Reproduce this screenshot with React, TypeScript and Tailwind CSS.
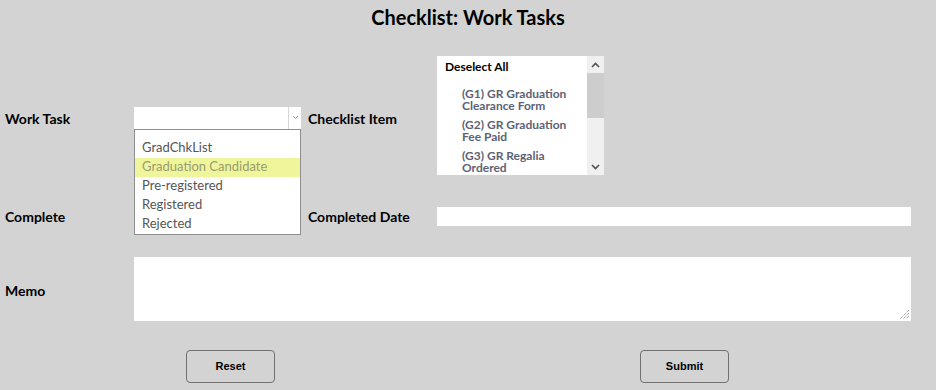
import React from "react";

const font = { fontFamily: '"Lato", "Open Sans", sans-serif' };

const options = ["GradChkList", "Graduation Candidate", "Pre-registered", "Registered", "Rejected"];

const checklist = [
  ["(G1) GR Graduation", "Clearance Form"],
  ["(G2) GR Graduation", "Fee Paid"],
  ["(G3) GR Regalia", "Ordered"],
];

function Chevron({ up }: { up?: boolean }) {
  return (
    <svg width="9" height="6" viewBox="0 0 9 6" className="block">
      <path
        d={up ? "M1 5 L4.5 1.5 L8 5" : "M1 1 L4.5 4.5 L8 1"}
        fill="none"
        stroke="#505050"
        strokeWidth="1.6"
      />
    </svg>
  );
}

function WorkTaskSelect() {
  return (
    <div className="relative w-[167px] h-[22px] mt-[4px]">
      <div className="flex h-full bg-white">
        <div className="flex-1" />
        <div className="w-[13px] border-l border-[#d6d6d6] flex items-center justify-center">
          <svg width="7" height="5" viewBox="0 0 7 5">
            <path d="M1 1 L3.5 3.5 L6 1" fill="none" stroke="#9a9a9a" strokeWidth="1" />
          </svg>
        </div>
      </div>
      {/* open dropdown */}
      <div className="absolute left-0 top-[22px] w-[167px] h-[106px] bg-white border border-[#8f8f8f] z-10 text-[13px] text-[#555]">
        <div className="h-[9px]" />
        {options.map((o, i) => (
          <div
            key={o}
            className={`h-[19px] flex items-center pl-[7px] ${
              i === 1 ? "bg-[#eef59b] text-[#9b9b6e]" : ""
            }`}
          >
            {o}
          </div>
        ))}
      </div>
    </div>
  );
}

function ChecklistBox() {
  return (
    <div className="w-[167px] h-[119px] bg-white flex">
      <div className="flex-1 pt-[4px] pl-[8px] overflow-hidden">
        <div className="text-[12px] font-bold text-black leading-[14px]">Deselect All</div>
        <div className="pl-[17px] pt-[14px] flex flex-col gap-[7px]">
          {checklist.map(([a, b]) => (
            <div key={a} className="text-[12px] font-bold text-[#5c6275] leading-[12px] whitespace-nowrap">
              <div>{a}</div>
              <div>{b}</div>
            </div>
          ))}
        </div>
      </div>
      <div className="w-[17px] bg-[#f0f0f0] flex flex-col items-center">
        <div className="h-[17px] flex items-center justify-center">
          <Chevron up />
        </div>
        <div className="w-[17px] h-[45px] bg-[#cdcdcd]" />
        <div className="flex-1" />
        <div className="h-[17px] flex items-center justify-center">
          <Chevron />
        </div>
      </div>
    </div>
  );
}

function Label({ children, className = "" }: { children: React.ReactNode; className?: string }) {
  return <div className={`text-[14px] font-bold text-black ${className}`}>{children}</div>;
}

export default function App() {
  return (
    <div className="w-[936px] h-[390px] bg-[#d3d3d3] overflow-hidden" style={font}>
      <h1 className="text-center text-[20px] font-bold text-black pt-[5px] leading-[24px]">
        Checklist: Work Tasks
      </h1>

      <div className="flex items-center mt-[27px] pl-[5px] h-[119px]">
        <Label className="w-[129px] mt-[6px]">Work Task</Label>
        <WorkTaskSelect />
        <Label className="w-[129px] ml-[7px] mt-[6px]">Checklist Item</Label>
        <ChecklistBox />
      </div>

      <div className="flex items-center mt-[32px] pl-[5px] h-[19px]">
        <Label className="w-[303px]">Complete</Label>
        <Label className="w-[129px]">Completed Date</Label>
        <div className="w-[474px] h-[19px] bg-white" />
      </div>

      <div className="flex items-center mt-[31px] pl-[5px] h-[64px]">
        <Label className="w-[129px] mt-[3px]">Memo</Label>
        <div className="relative w-[777px] h-[64px] bg-white">
          <svg width="12" height="12" viewBox="0 0 12 12" className="absolute right-[1px] bottom-[1px]">
            <path d="M11 2 L2 11 M11 5 L5 11 M11 8 L8 11" stroke="#808080" strokeWidth="1" strokeDasharray="1 1" />
          </svg>
        </div>
      </div>

      <div className="flex mt-[29px]">
        <button
          className="ml-[186px] w-[89px] h-[33px] rounded-[4px] border border-[#707070] text-[11px] font-bold text-black"
          style={{ fontFamily: '"Liberation Sans", Arial, sans-serif' }}
        >
          Reset
        </button>
        <button
          className="ml-[365px] w-[89px] h-[33px] rounded-[4px] border border-[#707070] text-[11px] font-bold text-black"
          style={{ fontFamily: '"Liberation Sans", Arial, sans-serif' }}
        >
          Submit
        </button>
      </div>
    </div>
  );
}
